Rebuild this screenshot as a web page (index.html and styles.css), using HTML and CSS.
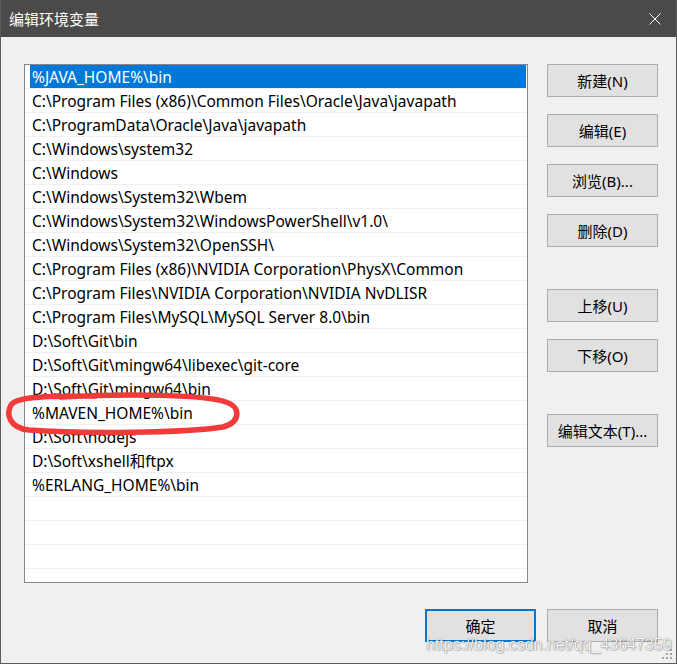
FILE: index.html
```html
<!DOCTYPE html>
<html lang="zh-CN">
<head>
  <meta charset="UTF-8" />
  <meta name="viewport" content="width=device-width, initial-scale=1.0" />
  <title>编辑环境变量</title>
  <link rel="stylesheet" href="styles.css">
</head>
<body>
  <div class="window">
    <header class="titlebar">
      <span class="title">编辑环境变量</span>
      <svg class="close" viewBox="0 0 12 12">
        <path d="M0.5 0.5L11.5 11.5M11.5 0.5L0.5 11.5" />
      </svg>
    </header>

    <div class="content">
      <div class="main">
        <div class="listbox">
          <div class="row selected"><span class="label">%JAVA_HOME%\bin</span></div>
          <div class="row"><span class="label">C:\Program Files (x86)\Common Files\Oracle\Java\javapath</span></div>
          <div class="row"><span class="label">C:\ProgramData\Oracle\Java\javapath</span></div>
          <div class="row"><span class="label">C:\Windows\system32</span></div>
          <div class="row"><span class="label">C:\Windows</span></div>
          <div class="row"><span class="label">C:\Windows\System32\Wbem</span></div>
          <div class="row"><span class="label">C:\Windows\System32\WindowsPowerShell\v1.0\</span></div>
          <div class="row"><span class="label">C:\Windows\System32\OpenSSH\</span></div>
          <div class="row"><span class="label">C:\Program Files (x86)\NVIDIA Corporation\PhysX\Common</span></div>
          <div class="row"><span class="label">C:\Program Files\NVIDIA Corporation\NVIDIA NvDLISR</span></div>
          <div class="row"><span class="label">C:\Program Files\MySQL\MySQL Server 8.0\bin</span></div>
          <div class="row"><span class="label">D:\Soft\Git\bin</span></div>
          <div class="row"><span class="label">D:\Soft\Git\mingw64\libexec\git-core</span></div>
          <div class="row"><span class="label">D:\Soft\Git\mingw64\bin</span></div>
          <div class="row"><span class="label">%MAVEN_HOME%\bin</span></div>
          <div class="row"><span class="label">D:\Soft\nodejs</span></div>
          <div class="row"><span class="label">D:\Soft\xshell和ftpx</span></div>
          <div class="row"><span class="label">%ERLANG_HOME%\bin</span></div>
          <div class="row"></div>
          <div class="row"></div>
          <div class="row"></div>
          <div class="row"></div>
        </div>

        <div class="side">
          <button class="btn">新建(N)</button>
          <button class="btn">编辑(E)</button>
          <button class="btn">浏览(B)...</button>
          <button class="btn">删除(D)</button>
          <button class="btn group">上移(U)</button>
          <button class="btn">下移(O)</button>
          <button class="btn group">编辑文本(T)...</button>
        </div>
      </div>

      <div class="footer">
        <button class="btn default">确定</button>
        <button class="btn">取消</button>
      </div>
    </div>

    <!-- hand-drawn red mark around the MAVEN entry -->
    <svg class="mark" viewBox="0 0 677 664">
      <path d="M60 397C130 393 205 395 225 402C240 407 240 422 222 427C185 433 80 434 28 430C8 428 5 414 10 405C15 397 40 396 95 396" />
    </svg>

    <div class="watermark">https://blog.csdn.net/qq_43647359</div>

    <svg class="grip" viewBox="0 0 12 12">
      <rect x="8" y="0" width="2" height="2" />
      <rect x="4" y="4" width="2" height="2" />
      <rect x="8" y="4" width="2" height="2" />
      <rect x="0" y="8" width="2" height="2" />
      <rect x="4" y="8" width="2" height="2" />
      <rect x="8" y="8" width="2" height="2" />
    </svg>
  </div>
</body>
</html>
```

FILE: styles.css
```css
* { box-sizing: border-box; margin: 0; padding: 0; }

body {
  font-family: "Noto Sans", "Noto Sans CJK SC", sans-serif;
  font-size: 15px;
  color: #000;
  background: #f0f0f0;
}

.window {
  position: relative;
  width: 677px;
  height: 664px;
  background: #f0f0f0;
  border: 1px solid #5c5b59;
  border-top: none;
  overflow: hidden;
}

.titlebar {
  display: flex;
  justify-content: space-between;
  align-items: center;
  height: 37px;
  margin: 0 -1px;
  padding: 0 16px 0 9px;
  background: #4b4a48;
  color: #fff;
}

.title {
  font-family: "Noto Sans CJK SC", sans-serif;
  font-size: 15px;
}

.close {
  width: 12px;
  height: 12px;
  stroke: #fff;
  stroke-width: 1;
  fill: none;
}

.content {
  padding: 27px 18px 0 23px;
}

.main {
  display: flex;
  gap: 19px;
}

.listbox {
  width: 504px;
  height: 519px;
  background: #fff;
  border: 1px solid #828790;
  overflow: hidden;
}

.row {
  display: flex;
  height: 24px;
  padding: 0 1px 0 5px;
  border-bottom: 1px solid #f0f0f0;
}

.label {
  flex: 1;
  padding: 1px 0 0 2px;
  font-size: 15.5px;
  line-height: 22px;
  white-space: nowrap;
}

.row.selected .label {
  background: #0078d7;
  color: #fff;
}

.side {
  display: flex;
  flex-direction: column;
  gap: 17px;
}

.btn {
  width: 111px;
  height: 33px;
  background: #e1e1e1;
  border: 1px solid #adadad;
  font-family: "Noto Sans", "Noto Sans CJK SC", sans-serif;
  font-size: 15px;
  color: #000;
}

.btn.group {
  margin-top: 25px;
}

.btn.default {
  border: 2px solid #0078d7;
}

.footer {
  display: flex;
  justify-content: flex-end;
  gap: 11px;
  margin-top: 26px;
}

.mark {
  position: absolute;
  top: 0;
  left: 0;
  width: 677px;
  height: 664px;
  pointer-events: none;
}

.mark path {
  fill: none;
  stroke: #f23a3a;
  stroke-width: 5.5;
  stroke-linecap: round;
  stroke-linejoin: round;
}

.watermark {
  position: absolute;
  left: 425px;
  top: 636px;
  font-family: "Liberation Sans", sans-serif;
  font-size: 16px;
  color: rgba(255, 255, 255, 0.95);
  text-shadow: 0 0 1px rgba(60, 60, 60, 0.8), 1px 1px 1px rgba(0, 0, 0, 0.2);
}

.grip {
  position: absolute;
  right: 2px;
  bottom: 2px;
  width: 12px;
  height: 12px;
  fill: #a3a3a3;
}
```
